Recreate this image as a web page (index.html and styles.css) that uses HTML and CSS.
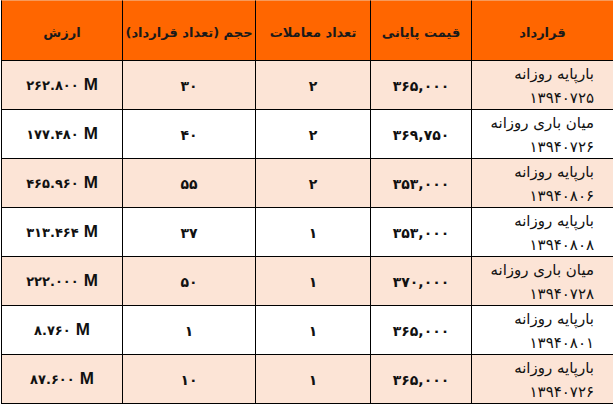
FILE: index.html
```html
<!DOCTYPE html>
<html lang="fa" dir="rtl">
<head>
<meta charset="utf-8">
<link rel="stylesheet" href="styles.css">
</head>
<body>
<div class="sheet">
  <div class="cell head">قرارداد</div>
  <div class="cell head">قیمت پایانی</div>
  <div class="cell head">تعداد معاملات</div>
  <div class="cell head">حجم (تعداد قرارداد)</div>
  <div class="cell head">ارزش</div>

  <div class="cell name tint"><span>بارپایه روزانه</span><span>۱۳۹۴۰۷۲۵</span></div>
  <div class="cell num tint">۳۶۵,۰۰۰</div>
  <div class="cell num tint">۲</div>
  <div class="cell num tint">۳۰</div>
  <div class="cell val tint"><span class="v">۲۶۲.۸۰۰</span> <span class="m">M</span></div>

  <div class="cell name"><span>میان باری روزانه</span><span>۱۳۹۴۰۷۲۶</span></div>
  <div class="cell num">۳۶۹,۷۵۰</div>
  <div class="cell num">۲</div>
  <div class="cell num">۴۰</div>
  <div class="cell val"><span class="v">۱۷۷.۴۸۰</span> <span class="m">M</span></div>

  <div class="cell name tint"><span>بارپایه روزانه</span><span>۱۳۹۴۰۸۰۶</span></div>
  <div class="cell num tint">۳۵۳,۰۰۰</div>
  <div class="cell num tint">۲</div>
  <div class="cell num tint">۵۵</div>
  <div class="cell val tint"><span class="v">۴۶۵.۹۶۰</span> <span class="m">M</span></div>

  <div class="cell name"><span>بارپایه روزانه</span><span>۱۳۹۴۰۸۰۸</span></div>
  <div class="cell num">۳۵۳,۰۰۰</div>
  <div class="cell num">۱</div>
  <div class="cell num">۳۷</div>
  <div class="cell val"><span class="v">۳۱۳.۴۶۴</span> <span class="m">M</span></div>

  <div class="cell name tint"><span>میان باری روزانه</span><span>۱۳۹۴۰۷۲۸</span></div>
  <div class="cell num tint">۳۷۰,۰۰۰</div>
  <div class="cell num tint">۱</div>
  <div class="cell num tint">۵۰</div>
  <div class="cell val tint"><span class="v">۲۲۲.۰۰۰</span> <span class="m">M</span></div>

  <div class="cell name"><span>بارپایه روزانه</span><span>۱۳۹۴۰۸۰۱</span></div>
  <div class="cell num">۳۶۵,۰۰۰</div>
  <div class="cell num">۱</div>
  <div class="cell num">۱</div>
  <div class="cell val"><span class="v">۸.۷۶۰</span> <span class="m">M</span></div>

  <div class="cell name tint"><span>بارپایه روزانه</span><span>۱۳۹۴۰۷۲۶</span></div>
  <div class="cell num tint">۳۶۵,۰۰۰</div>
  <div class="cell num tint">۱</div>
  <div class="cell num tint">۱۰</div>
  <div class="cell val tint"><span class="v">۸۷.۶۰۰</span> <span class="m">M</span></div>
</div>
</body>
</html>
```
FILE: styles.css
```css
html, body {
  margin: 0;
  padding: 0;
  background: #ffffff;
}
body {
  font-family: "DejaVu Sans", "Noto Sans", sans-serif;
  color: #111111;
}
.sheet {
  direction: rtl;
  display: grid;
  grid-template-columns: 142px 101px 115px 133px 121px;
  grid-template-rows: 61px repeat(7, 49px);
  width: 612px;
}
.cell {
  box-sizing: border-box;
  border-left: 1px solid #000;
  border-bottom: 1px solid #000;
  display: flex;
  align-items: center;
  justify-content: center;
  font-size: 13px;
  background: #ffffff;
}
.tint {
  background: #fce4d6;
}
.head {
  background: #ff6600;
  border-top: 1px solid #f79a5a;
  font-weight: bold;
  font-size: 13px;
  color: #1a1a1a;
  padding-top: 3px;
}
.num {
  font-weight: bold;
  font-size: 14px;
  padding-top: 2px;
}
.name {
  flex-direction: column;
  align-items: flex-start;
  justify-content: flex-start;
  padding-right: 19px;
  padding-top: 1px;
  line-height: 24px;
  font-size: 15px;
}
.val {
  direction: ltr;
  font-weight: bold;
  gap: 5px;
}
.val .v {
  font-size: 13px;
}
.val .m {
  font-family: "Liberation Sans", Arial, sans-serif;
  font-size: 17px;
  font-weight: bold;
}
```
